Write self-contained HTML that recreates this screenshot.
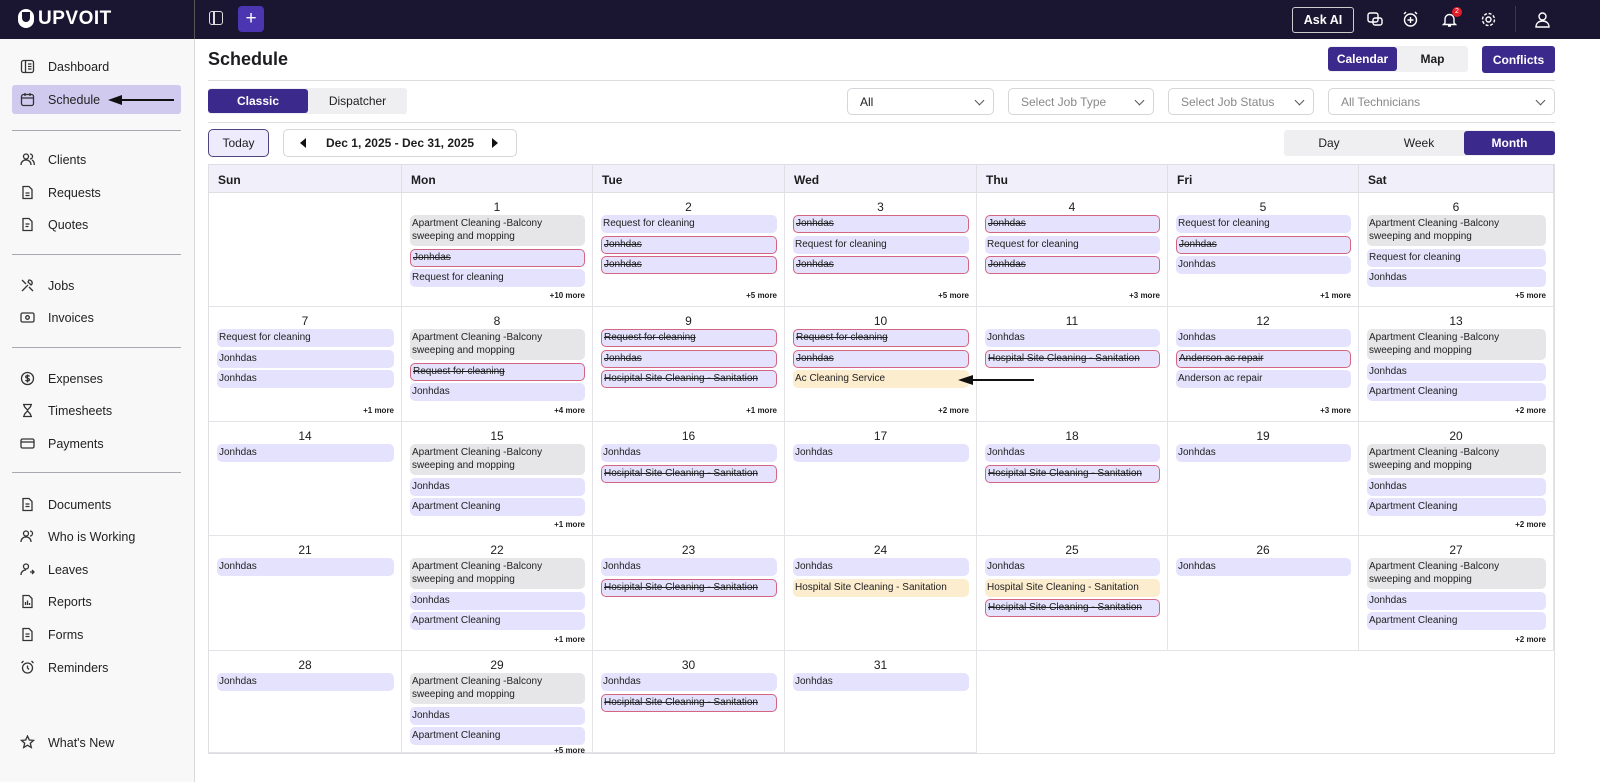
<!DOCTYPE html>
<html><head><meta charset="utf-8"><style>
*{box-sizing:border-box;margin:0;padding:0}
body{width:1600px;height:782px;overflow:hidden;font-family:"Liberation Sans",sans-serif;background:#fff;color:#1d1d1f;position:relative}
.top{position:absolute;left:0;top:0;width:1600px;height:39px;background:#1a1631}
.side{position:absolute;left:0;top:39px;width:195px;height:743px;background:#f8f8f9;border-right:1px solid #d8d8dc}
.ni{position:absolute;left:12px;width:169px;height:29px;display:flex;align-items:center;font-size:12.5px;color:#222;font-weight:500}
.ni svg{position:absolute;left:8px;width:15px;height:15px}
.ni span{position:absolute;left:36px}
.hr{position:absolute;left:12px;width:169px;height:1px;background:#a8a8b0}
.abs{position:absolute}
.btn{position:absolute;display:flex;align-items:center;justify-content:center;font-size:12px;font-weight:bold;border-radius:3px}
.pur{background:#3b2a8c;color:#fff}
.dd{position:absolute;top:88px;height:27px;border:1px solid #d5d5da;border-radius:5px;font-size:12px;color:#888;display:flex;align-items:center;padding-left:12px}
.dd:after{content:"";position:absolute;right:10px;top:8px;width:6px;height:6px;border-right:1.3px solid #555;border-bottom:1.3px solid #555;transform:rotate(45deg)}
.cal{position:absolute;left:208px;top:164px;width:1347px;height:590px;border:1px solid #dedee3;display:grid;grid-template-columns:193px 191px 192px 192px 191px 191px 1fr;grid-template-rows:28px 114px 115px 114px 115px 1fr}
.h{background:#f1effa;font-size:12px;font-weight:bold;padding:8px 9px;border-right:1px solid #dedee3;border-bottom:1px solid #dedee3}
.c{position:relative;border-right:1px solid #e4e4e8;border-bottom:1px solid #e4e4e8;padding:22px 7px 0 8px}
.c .n{position:absolute;top:7px;left:0;right:0;text-align:center;font-size:12px}
.e{height:18px;margin-bottom:2.5px;border-radius:5px;background:#e4e2fc;font-size:10px;line-height:18px;padding:0 2px;white-space:nowrap;overflow:hidden;color:#222}
.a{height:31px;background:#e6e6e8;line-height:12.5px;padding:3px 2px 0}
.s{text-decoration:line-through;border:1px solid #d46582;line-height:16px;padding:0 2px}
.o{background:#fdedcf}
.m{position:absolute;right:7px;bottom:6px;font-size:8px;font-weight:bold}
.ic{position:absolute;top:11px;width:17px;height:17px}
</style></head><body>
<div class="top">
 <div class="abs" style="left:18px;top:9px;width:16px;height:19px;border-radius:8px;background:#fff"></div>
 <div class="abs" style="left:22px;top:12px;width:8px;height:10px;border-radius:0 0 4px 4px;background:#1a1631"></div>
 <div class="abs" style="left:38px;top:8px;color:#fff;font-weight:bold;font-size:19px;letter-spacing:0.5px">UPVOIT</div>
 <div class="abs" style="left:194px;top:0;width:1px;height:39px;background:#555"></div>
 <div class="abs" style="left:209px;top:11px;width:14px;height:14px;border:1.5px solid #ddd;border-radius:3px"></div>
 <div class="abs" style="left:213px;top:11px;width:1.5px;height:14px;background:#ddd"></div>
 <div class="abs" style="left:238px;top:6px;width:26px;height:26px;background:#4b35b0;border-radius:4px;color:#fff;font-size:19px;text-align:center;line-height:25px">+</div>
 <div class="btn" style="left:1292px;top:7px;width:62px;height:26px;border:1px solid #ccc;color:#fff;font-size:12.5px">Ask AI</div>
 <svg class="ic" style="left:1367px" viewBox="0 0 17 17" fill="none" stroke="#fff" stroke-width="1.4"><rect x="1" y="2" width="10" height="9" rx="2"/><rect x="6" y="7" width="9" height="7" rx="2"/></svg>
 <svg class="ic" style="left:1402px" viewBox="0 0 17 17" fill="none" stroke="#fff" stroke-width="1.4"><circle cx="8.5" cy="9" r="6"/><path d="M8.5 6v6M5.5 9h6M2 3l2-2M15 3l-2-2"/></svg>
 <svg class="ic" style="left:1441px" viewBox="0 0 17 17" fill="none" stroke="#fff" stroke-width="1.4"><path d="M4 12V8a4.5 4.5 0 019 0v4l1.5 1.5h-12zM7 15h3"/></svg>
 <div class="abs" style="left:1452px;top:7px;width:10px;height:10px;border-radius:5px;background:#e21e2a;color:#fff;font-size:7px;text-align:center;line-height:10px">2</div>
 <svg class="ic" style="left:1480px" viewBox="0 0 17 17" fill="none" stroke="#fff" stroke-width="1.4"><circle cx="8.5" cy="8.5" r="2.5"/><circle cx="8.5" cy="8.5" r="6" stroke-dasharray="3 1.7"/></svg>
 <div class="abs" style="left:1515px;top:6px;width:1px;height:26px;background:#3a3650"></div>
 <svg class="ic" style="left:1534px" viewBox="0 0 17 17" fill="none" stroke="#fff" stroke-width="1.4"><circle cx="8.5" cy="5.5" r="3.5"/><path d="M2 16c0-4 3-6 6.5-6s6.5 2 6.5 6z"/></svg>
</div>
<div class="side">
 <div class="ni" style="top:13px"><svg viewBox="0 0 15 15" fill="none" stroke="#333" stroke-width="1.3"><rect x="1.5" y="1.5" width="12" height="12" rx="2"/><path d="M5.5 1.5v12M8 5h3.5M8 7.5h3.5M8 10h3.5"/></svg><span>Dashboard</span></div>
 <div class="ni" style="top:46px;background:#d0caef;border-radius:3px"><svg viewBox="0 0 15 15" fill="none" stroke="#333" stroke-width="1.3"><rect x="1.5" y="2.5" width="12" height="11" rx="2"/><path d="M1.5 6h12M5 1v3M10 1v3"/></svg><span>Schedule</span></div>
 <div class="abs" style="left:120px;top:60px;width:54px;height:2px;background:#111"></div>
 <div class="abs" style="left:108px;top:56px;width:0;height:0;border-top:5px solid transparent;border-bottom:5px solid transparent;border-right:14px solid #111"></div>
 <div class="hr" style="top:91px"></div>
 <div class="ni" style="top:106px"><svg viewBox="0 0 15 15" fill="none" stroke="#333" stroke-width="1.3"><circle cx="6" cy="4.5" r="2.5"/><path d="M1 13c0-3 2-5 5-5s5 2 5 5M10 2a2.5 2.5 0 010 5M12 8c1.5.7 2.3 2.5 2.3 5"/></svg><span>Clients</span></div>
 <div class="ni" style="top:139px"><svg viewBox="0 0 15 15" fill="none" stroke="#333" stroke-width="1.3"><path d="M3 1.5h6l3 3v9H3zM5.5 8h4M5.5 10.5h4"/></svg><span>Requests</span></div>
 <div class="ni" style="top:171px"><svg viewBox="0 0 15 15" fill="none" stroke="#333" stroke-width="1.3"><path d="M3 1.5h6l3 3v9H3zM5.5 7h4M5.5 9.5h3"/></svg><span>Quotes</span></div>
 <div class="hr" style="top:215px"></div>
 <div class="ni" style="top:232px"><svg viewBox="0 0 15 15" fill="none" stroke="#333" stroke-width="1.3"><path d="M2 13l6-6M9 2a3 3 0 013 4l-1 1-3-3zM2 2l4 4M9 9l4 4"/></svg><span>Jobs</span></div>
 <div class="ni" style="top:264px"><svg viewBox="0 0 15 15" fill="none" stroke="#333" stroke-width="1.3"><rect x="1" y="3" width="13" height="9" rx="1.5"/><circle cx="7.5" cy="7.5" r="1.8"/></svg><span>Invoices</span></div>
 <div class="hr" style="top:308px"></div>
 <div class="ni" style="top:325px"><svg viewBox="0 0 15 15" fill="none" stroke="#333" stroke-width="1.3"><circle cx="7.5" cy="7.5" r="6"/><path d="M9.5 5.5c-.5-1-3.5-1.3-3.8.3-.3 1.8 4 1.2 3.8 3-.2 1.6-3.5 1.3-4 .2M7.5 3.5v8"/></svg><span>Expenses</span></div>
 <div class="ni" style="top:357px"><svg viewBox="0 0 15 15" fill="none" stroke="#333" stroke-width="1.3"><path d="M3 1.5h9M3 13.5h9M4 1.5c0 4 3.5 4 3.5 6S4 9.5 4 13.5M11 1.5c0 4-3.5 4-3.5 6s3.5 2 3.5 6"/></svg><span>Timesheets</span></div>
 <div class="ni" style="top:390px"><svg viewBox="0 0 15 15" fill="none" stroke="#333" stroke-width="1.3"><rect x="1" y="3" width="13" height="9" rx="1.5"/><path d="M1 6h13"/></svg><span>Payments</span></div>
 <div class="hr" style="top:433px"></div>
 <div class="ni" style="top:451px"><svg viewBox="0 0 15 15" fill="none" stroke="#333" stroke-width="1.3"><path d="M3 1.5h6l3 3v9H3zM5.5 7h4M5.5 9.5h4"/></svg><span>Documents</span></div>
 <div class="ni" style="top:483px"><svg viewBox="0 0 15 15" fill="none" stroke="#333" stroke-width="1.3"><circle cx="6" cy="4.5" r="2.5"/><path d="M1 13c0-3 2-5 5-5s5 2 5 5M10 2a2.5 2.5 0 010 5"/></svg><span>Who is Working</span></div>
 <div class="ni" style="top:516px"><svg viewBox="0 0 15 15" fill="none" stroke="#333" stroke-width="1.3"><circle cx="6" cy="4.5" r="2.5"/><path d="M1 13c0-3 2-5 5-5M10 10h4M12 8l2 2-2 2"/></svg><span>Leaves</span></div>
 <div class="ni" style="top:548px"><svg viewBox="0 0 15 15" fill="none" stroke="#333" stroke-width="1.3"><path d="M3 1.5h6l3 3v9H3zM5.5 11V8M7.5 11V6.5M9.5 11V9"/></svg><span>Reports</span></div>
 <div class="ni" style="top:581px"><svg viewBox="0 0 15 15" fill="none" stroke="#333" stroke-width="1.3"><path d="M3 1.5h6l3 3v9H3zM5.5 7h4M5.5 9.5h4"/></svg><span>Forms</span></div>
 <div class="ni" style="top:614px"><svg viewBox="0 0 15 15" fill="none" stroke="#333" stroke-width="1.3"><circle cx="7.5" cy="8" r="5"/><path d="M7.5 5.5V8l1.5 1.5M1.5 3l2-2M13.5 3l-2-2"/></svg><span>Reminders</span></div>
 <div class="ni" style="top:689px"><svg viewBox="0 0 15 15" fill="none" stroke="#333" stroke-width="1.3"><path d="M7.5 1l1.8 4 4.2.4-3.2 2.8 1 4.3-3.8-2.3-3.8 2.3 1-4.3L1.5 5.4l4.2-.4z"/></svg><span>What's New</span></div>
</div>

<div class="abs" style="left:208px;top:49px;font-size:18px;font-weight:bold">Schedule</div>
<div class="btn" style="left:1328px;top:46px;width:140px;height:26px;background:#f0f0f2"></div>
<div class="btn pur" style="left:1328px;top:47px;width:69px;height:24px">Calendar</div>
<div class="btn" style="left:1397px;top:47px;width:71px;height:24px">Map</div>
<div class="btn pur" style="left:1482px;top:46px;width:73px;height:27px">Conflicts</div>
<div class="abs" style="left:208px;top:80px;width:1347px;height:1px;background:#ddd"></div>
<div class="btn" style="left:208px;top:88px;width:199px;height:26px;background:#efeff1"></div>
<div class="btn pur" style="left:208px;top:89px;width:100px;height:24px;font-weight:bold">Classic</div>
<div class="btn" style="left:308px;top:89px;width:99px;height:24px;font-weight:500">Dispatcher</div>
<div class="dd" style="left:847px;width:147px;color:#222">All</div>
<div class="dd" style="left:1008px;width:146px">Select Job Type</div>
<div class="dd" style="left:1168px;width:146px">Select Job Status</div>
<div class="dd" style="left:1328px;width:227px">All Technicians</div>
<div class="abs" style="left:208px;top:122px;width:1347px;height:1px;background:#ddd"></div>
<div class="btn" style="left:208px;top:129px;width:61px;height:28px;background:#eeebfc;border:1px solid #4b4580;border-radius:5px;font-weight:500">Today</div>
<div class="btn" style="left:283px;top:129px;width:234px;height:28px;border:1px solid #d5d5da;border-radius:5px;font-weight:bold">Dec 1, 2025 - Dec 31, 2025</div>
<div class="abs" style="left:300px;top:138px;border-top:5px solid transparent;border-bottom:5px solid transparent;border-right:6px solid #111"></div>
<div class="abs" style="left:492px;top:138px;border-top:5px solid transparent;border-bottom:5px solid transparent;border-left:6px solid #111"></div>
<div class="btn" style="left:1284px;top:130px;width:271px;height:26px;background:#efeff1"></div>
<div class="btn" style="left:1284px;top:130px;width:90px;height:26px;font-weight:500">Day</div>
<div class="btn" style="left:1374px;top:130px;width:90px;height:26px;font-weight:500">Week</div>
<div class="btn pur" style="left:1464px;top:131px;width:91px;height:24px">Month</div>

<div class="cal">
<div class="h">Sun</div><div class="h">Mon</div><div class="h">Tue</div><div class="h">Wed</div><div class="h">Thu</div><div class="h">Fri</div><div class="h">Sat</div>

<div class="c"></div>
<div class="c"><div class="n">1</div><div class="e a">Apartment Cleaning -Balcony<br>sweeping and mopping</div><div class="e s">Jonhdas</div><div class="e">Request for cleaning</div><div class="m">+10 more</div></div>
<div class="c"><div class="n">2</div><div class="e">Request for cleaning</div><div class="e s">Jonhdas</div><div class="e s">Jonhdas</div><div class="m">+5 more</div></div>
<div class="c"><div class="n">3</div><div class="e s">Jonhdas</div><div class="e">Request for cleaning</div><div class="e s">Jonhdas</div><div class="m">+5 more</div></div>
<div class="c"><div class="n">4</div><div class="e s">Jonhdas</div><div class="e">Request for cleaning</div><div class="e s">Jonhdas</div><div class="m">+3 more</div></div>
<div class="c"><div class="n">5</div><div class="e">Request for cleaning</div><div class="e s">Jonhdas</div><div class="e">Jonhdas</div><div class="m">+1 more</div></div>
<div class="c"><div class="n">6</div><div class="e a">Apartment Cleaning -Balcony<br>sweeping and mopping</div><div class="e">Request for cleaning</div><div class="e">Jonhdas</div><div class="m">+5 more</div></div>

<div class="c"><div class="n">7</div><div class="e">Request for cleaning</div><div class="e">Jonhdas</div><div class="e">Jonhdas</div><div class="m">+1 more</div></div>
<div class="c"><div class="n">8</div><div class="e a">Apartment Cleaning -Balcony<br>sweeping and mopping</div><div class="e s">Request for cleaning</div><div class="e">Jonhdas</div><div class="m">+4 more</div></div>
<div class="c"><div class="n">9</div><div class="e s">Request for cleaning</div><div class="e s">Jonhdas</div><div class="e s">Hosipital Site Cleaning - Sanitation</div><div class="m">+1 more</div></div>
<div class="c"><div class="n">10</div><div class="e s">Request for cleaning</div><div class="e s">Jonhdas</div><div class="e o">Ac Cleaning Service</div><div class="m">+2 more</div></div>
<div class="c"><div class="n">11</div><div class="e">Jonhdas</div><div class="e s">Hospital Site Cleaning - Sanitation</div></div>
<div class="c"><div class="n">12</div><div class="e">Jonhdas</div><div class="e s">Anderson ac repair</div><div class="e">Anderson ac repair</div><div class="m">+3 more</div></div>
<div class="c"><div class="n">13</div><div class="e a">Apartment Cleaning -Balcony<br>sweeping and mopping</div><div class="e">Jonhdas</div><div class="e">Apartment Cleaning</div><div class="m">+2 more</div></div>

<div class="c"><div class="n">14</div><div class="e">Jonhdas</div></div>
<div class="c"><div class="n">15</div><div class="e a">Apartment Cleaning -Balcony<br>sweeping and mopping</div><div class="e">Jonhdas</div><div class="e">Apartment Cleaning</div><div class="m">+1 more</div></div>
<div class="c"><div class="n">16</div><div class="e">Jonhdas</div><div class="e s">Hosipital Site Cleaning - Sanitation</div></div>
<div class="c"><div class="n">17</div><div class="e">Jonhdas</div></div>
<div class="c"><div class="n">18</div><div class="e">Jonhdas</div><div class="e s">Hosipital Site Cleaning - Sanitation</div></div>
<div class="c"><div class="n">19</div><div class="e">Jonhdas</div></div>
<div class="c"><div class="n">20</div><div class="e a">Apartment Cleaning -Balcony<br>sweeping and mopping</div><div class="e">Jonhdas</div><div class="e">Apartment Cleaning</div><div class="m">+2 more</div></div>

<div class="c"><div class="n">21</div><div class="e">Jonhdas</div></div>
<div class="c"><div class="n">22</div><div class="e a">Apartment Cleaning -Balcony<br>sweeping and mopping</div><div class="e">Jonhdas</div><div class="e">Apartment Cleaning</div><div class="m">+1 more</div></div>
<div class="c"><div class="n">23</div><div class="e">Jonhdas</div><div class="e s">Hosipital Site Cleaning - Sanitation</div></div>
<div class="c"><div class="n">24</div><div class="e">Jonhdas</div><div class="e o">Hospital Site Cleaning - Sanitation</div></div>
<div class="c"><div class="n">25</div><div class="e">Jonhdas</div><div class="e o">Hospital Site Cleaning - Sanitation</div><div class="e s">Hosipital Site Cleaning - Sanitation</div></div>
<div class="c"><div class="n">26</div><div class="e">Jonhdas</div></div>
<div class="c"><div class="n">27</div><div class="e a">Apartment Cleaning -Balcony<br>sweeping and mopping</div><div class="e">Jonhdas</div><div class="e">Apartment Cleaning</div><div class="m">+2 more</div></div>

<div class="c"><div class="n">28</div><div class="e">Jonhdas</div></div>
<div class="c"><div class="n">29</div><div class="e a">Apartment Cleaning -Balcony<br>sweeping and mopping</div><div class="e">Jonhdas</div><div class="e">Apartment Cleaning</div><div class="m" style="bottom:-3px">+5 more</div></div>
<div class="c"><div class="n">30</div><div class="e">Jonhdas</div><div class="e s">Hosipital Site Cleaning - Sanitation</div></div>
<div class="c"><div class="n">31</div><div class="e">Jonhdas</div></div>
<div class="c" style="border:none"></div><div class="c" style="border:none"></div><div class="c" style="border:none"></div>
</div>
<div class="abs" style="left:972px;top:379px;width:62px;height:2px;background:#111"></div>
<div class="abs" style="left:958px;top:375px;border-top:5px solid transparent;border-bottom:5px solid transparent;border-right:15px solid #111"></div>
</body></html>
